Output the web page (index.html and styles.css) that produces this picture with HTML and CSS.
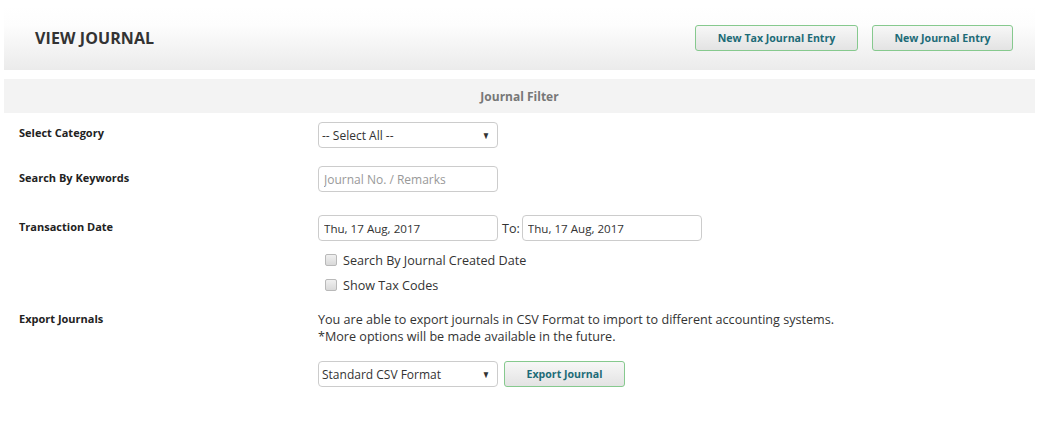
FILE: index.html
```html
<!DOCTYPE html>
<html>
<head>
<meta charset="utf-8">
<link rel="stylesheet" href="styles.css">
</head>
<body>
<div class="page">
  <div class="header">
    <h1 class="title">VIEW JOURNAL</h1>
    <div class="header-actions">
      <button class="btn btn-tax">New Tax Journal Entry</button>
      <button class="btn btn-new">New Journal Entry</button>
    </div>
  </div>
  <div class="filter-bar">Journal Filter</div>

  <div class="row row-category">
    <div class="label">Select Category</div>
    <div class="controls">
      <div class="select"><span class="select-text">-- Select All --</span><span class="arrow">&#9660;</span></div>
    </div>
  </div>

  <div class="row row-keywords">
    <div class="label">Search By Keywords</div>
    <div class="controls">
      <input class="field" type="text" placeholder="Journal No. / Remarks">
    </div>
  </div>

  <div class="row row-date">
    <div class="label">Transaction Date</div>
    <div class="controls">
      <div class="date-line">
        <input class="field" type="text" value="Thu, 17 Aug, 2017">
        <span class="to">To:</span>
        <input class="field" type="text" value="Thu, 17 Aug, 2017">
      </div>
      <label class="check"><span class="box"></span>Search By Journal Created Date</label>
      <label class="check"><span class="box"></span>Show Tax Codes</label>
    </div>
  </div>

  <div class="row row-export">
    <div class="label">Export Journals</div>
    <div class="controls">
      <p class="note">You are able to export journals in CSV Format to import to different accounting systems.<br>*More options will be made available in the future.</p>
      <div class="export-line">
        <div class="select"><span class="select-text">Standard CSV Format</span><span class="arrow">&#9660;</span></div>
        <button class="btn btn-export">Export Journal</button>
      </div>
    </div>
  </div>
</div>
</body>
</html>
```
FILE: styles.css
```css
* { box-sizing: border-box; }
html, body { margin: 0; padding: 0; background: #fff; }
body {
  font-family: "Open Sans", "Liberation Sans", sans-serif;
  color: #333;
  font-size: 13px;
}
.page { padding: 6px 8px 0 4px; }
.header {
  height: 64px;
  display: flex;
  align-items: center;
  justify-content: space-between;
  background: linear-gradient(to bottom, #ffffff 0%, #fdfdfd 30%, #ebebeb 100%);
  padding: 0 22px 0 31px;
}
.title {
  margin: 0;
  font-size: 16px;
  font-weight: 700;
  color: #333;
  letter-spacing: 0.1px;
}
.header-actions { display: flex; gap: 14px; }
.btn {
  font-family: "Open Sans", "Liberation Sans", sans-serif;
  font-weight: 700;
  font-size: 10.6px;
  color: #1d6b77;
  background: linear-gradient(to bottom, #f7f7f7, #e3e3e3);
  border: 1px solid #86c98e;
  border-radius: 3px;
  height: 26px;
  padding: 0;
}
.btn-tax { width: 163px; }
.btn-new { width: 141px; }
.filter-bar {
  margin-top: 9px;
  height: 34px;
  background: #f3f3f3;
  color: #777;
  font-weight: 700;
  font-size: 12px;
  display: flex;
  align-items: center;
  justify-content: center;
}
.row { display: flex; align-items: flex-start; }
.label {
  width: 314px;
  padding-left: 15px;
  font-size: 11px;
  font-weight: 700;
  color: #222;
  line-height: 15px;
  padding-top: 3px;
}
.controls { display: flex; flex-direction: column; }
.row-category { margin-top: 9px; }
.row-keywords { margin-top: 18px; }
.row-date { margin-top: 23px; }
.row-export { margin-top: 15px; }
.row-keywords .label, .row-date .label { padding-top: 4px; }
.row-export .label { padding-top: 1px; }
.select {
  width: 180px;
  height: 26px;
  border: 1px solid #ccc;
  border-radius: 4px;
  background: #fff;
  display: flex;
  align-items: center;
  justify-content: space-between;
  padding: 0 6px 0 3px;
  font-size: 12px;
  color: #333;
}
.arrow { font-size: 10px; color: #333; transform: scaleX(0.8); }
.field {
  width: 180px;
  height: 26px;
  border: 1px solid #ccc;
  border-radius: 4px;
  padding: 0 5px;
  font-family: "Open Sans", "Liberation Sans", sans-serif;
  font-size: 11.6px;
  color: #333;
  outline: none;
}
.field::placeholder { color: #999; font-size: 12px; }
.date-line { display: flex; align-items: center; }
.to { margin: 0 2px 0 4px; font-size: 12.6px; color: #333; }
.check {
  display: flex;
  align-items: center;
  height: 20px;
  margin-top: 9px;
  padding-left: 7px;
  font-size: 12.6px;
  color: #333;
}
.check + .check { margin-top: 5px; }
.box {
  width: 12px;
  height: 12px;
  border: 1px solid #b9b9b9;
  border-radius: 2px;
  background: linear-gradient(to bottom, #f0f0f0, #d9d9d9);
  margin-right: 6px;
}
.note {
  margin: 0;
  line-height: 17px;
  font-size: 12.6px;
  color: #333;
  padding-top: 1px;
}
.export-line { display: flex; align-items: center; gap: 6px; margin-top: 16px; }
.btn-export { width: 121px; height: 26px; }
```
